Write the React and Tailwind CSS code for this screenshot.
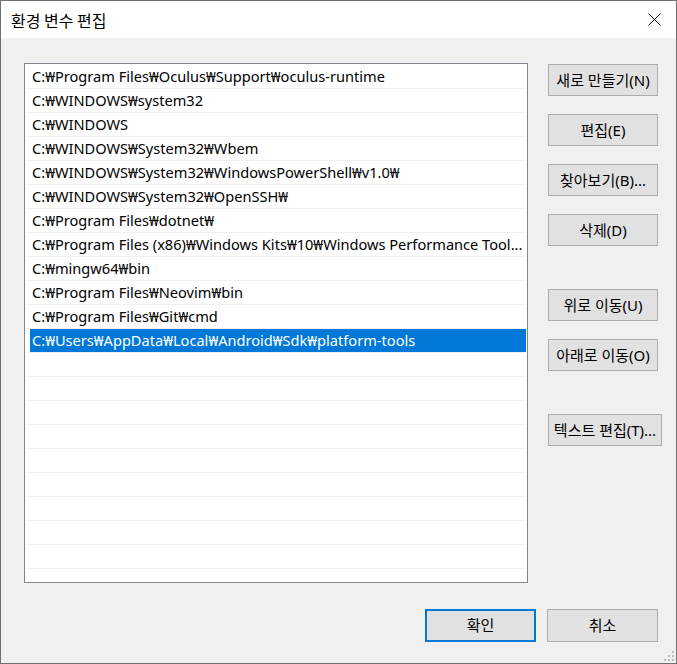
import React from "react";

const W = "\u20A9";
const rows = [
  `C:${W}Program Files${W}Oculus${W}Support${W}oculus-runtime`,
  `C:${W}WINDOWS${W}system32`,
  `C:${W}WINDOWS`,
  `C:${W}WINDOWS${W}System32${W}Wbem`,
  `C:${W}WINDOWS${W}System32${W}WindowsPowerShell${W}v1.0${W}`,
  `C:${W}WINDOWS${W}System32${W}OpenSSH${W}`,
  `C:${W}Program Files${W}dotnet${W}`,
  `C:${W}Program Files (x86)${W}Windows Kits${W}10${W}Windows Performance Tool...`,
  `C:${W}mingw64${W}bin`,
  `C:${W}Program Files${W}Neovim${W}bin`,
  `C:${W}Program Files${W}Git${W}cmd`,
  `C:${W}Users${W}AppData${W}Local${W}Android${W}Sdk${W}platform-tools`,
];

const font = { fontFamily: '"Noto Sans", "Noto Sans CJK KR", sans-serif' };

function Btn({ children, wide, className = "" }) {
  return (
    <div
      className={`flex h-[32px] items-center justify-center border border-[#adadad] bg-[#e1e1e1] text-[15px] text-black ${
        wide ? "w-[114px]" : "w-[110px]"
      } ${className}`}
    >
      {children}
    </div>
  );
}

export default function App() {
  const all = [...rows];
  while (all.length < 21) all.push("");
  return (
    <div
      className="flex h-[664px] w-[677px] flex-col border border-[#6f6f6f] bg-[#f0f0f0]"
      style={font}
    >
      <div className="flex h-[37px] shrink-0 items-center justify-between bg-white pl-[10px] pr-[15px]">
        <span className="text-[16px] text-black" style={{ fontFamily: '"Noto Sans CJK KR", sans-serif' }}>환경 변수 편집</span>
        <svg width="13" height="13" viewBox="0 0 13 13">
          <path d="M0.5 0.5 L12.5 12.5 M12.5 0.5 L0.5 12.5" stroke="#000" strokeWidth="1" />
        </svg>
      </div>
      <div className="relative flex flex-1 flex-col">
        <div className="mt-[25px] flex pl-[23px]">
          <div className="flex h-[520px] w-[504px] flex-col overflow-hidden border border-[#828790] bg-white p-px">
            {all.map((r, i) => {
              const sel = i === 11;
              return (
                <div key={i} className="h-[24px] shrink-0 border-b border-[#f0f0f0]">
                  <div
                    className={`ml-[4px] flex h-[23px] items-center overflow-hidden whitespace-nowrap pl-[2px] text-[14.6px] ${
                      sel ? "bg-[#0078d7] text-white" : "text-black"
                    }`}
                  >
                    {r}
                  </div>
                </div>
              );
            })}
          </div>
          <div className="ml-[20px] mt-px flex flex-col">
            <Btn>새로 만들기(N)</Btn>
            <Btn className="mt-[18px]">편집(E)</Btn>
            <Btn className="mt-[18px]">찾아보기(B)...</Btn>
            <Btn className="mt-[18px]">삭제(D)</Btn>
            <Btn className="mt-[43px]">위로 이동(U)</Btn>
            <Btn className="mt-[18px]">아래로 이동(O)</Btn>
            <Btn wide className="mt-[43px]">텍스트 편집(T)...</Btn>
          </div>
        </div>
        <div className="mt-[26px] flex justify-end gap-[11px] pr-[18px]">
          <div className="flex h-[33px] w-[111px] items-center justify-center border-2 border-[#0078d7] bg-[#e1e1e1] text-[15px]">
            확인
          </div>
          <div className="flex h-[33px] w-[111px] items-center justify-center border border-[#adadad] bg-[#e1e1e1] text-[15px]">
            취소
          </div>
        </div>
        <svg className="absolute bottom-[1px] right-[1px]" width="12" height="12" viewBox="0 0 12 12">
          {[
            [8, 0],
            [4, 4],
            [8, 4],
            [0, 8],
            [4, 8],
            [8, 8],
          ].map(([x, y], i) => (
            <rect key={i} x={x + 1} y={y + 1} width="2" height="2" fill="#bcbcbc" />
          ))}
        </svg>
      </div>
    </div>
  );
}
